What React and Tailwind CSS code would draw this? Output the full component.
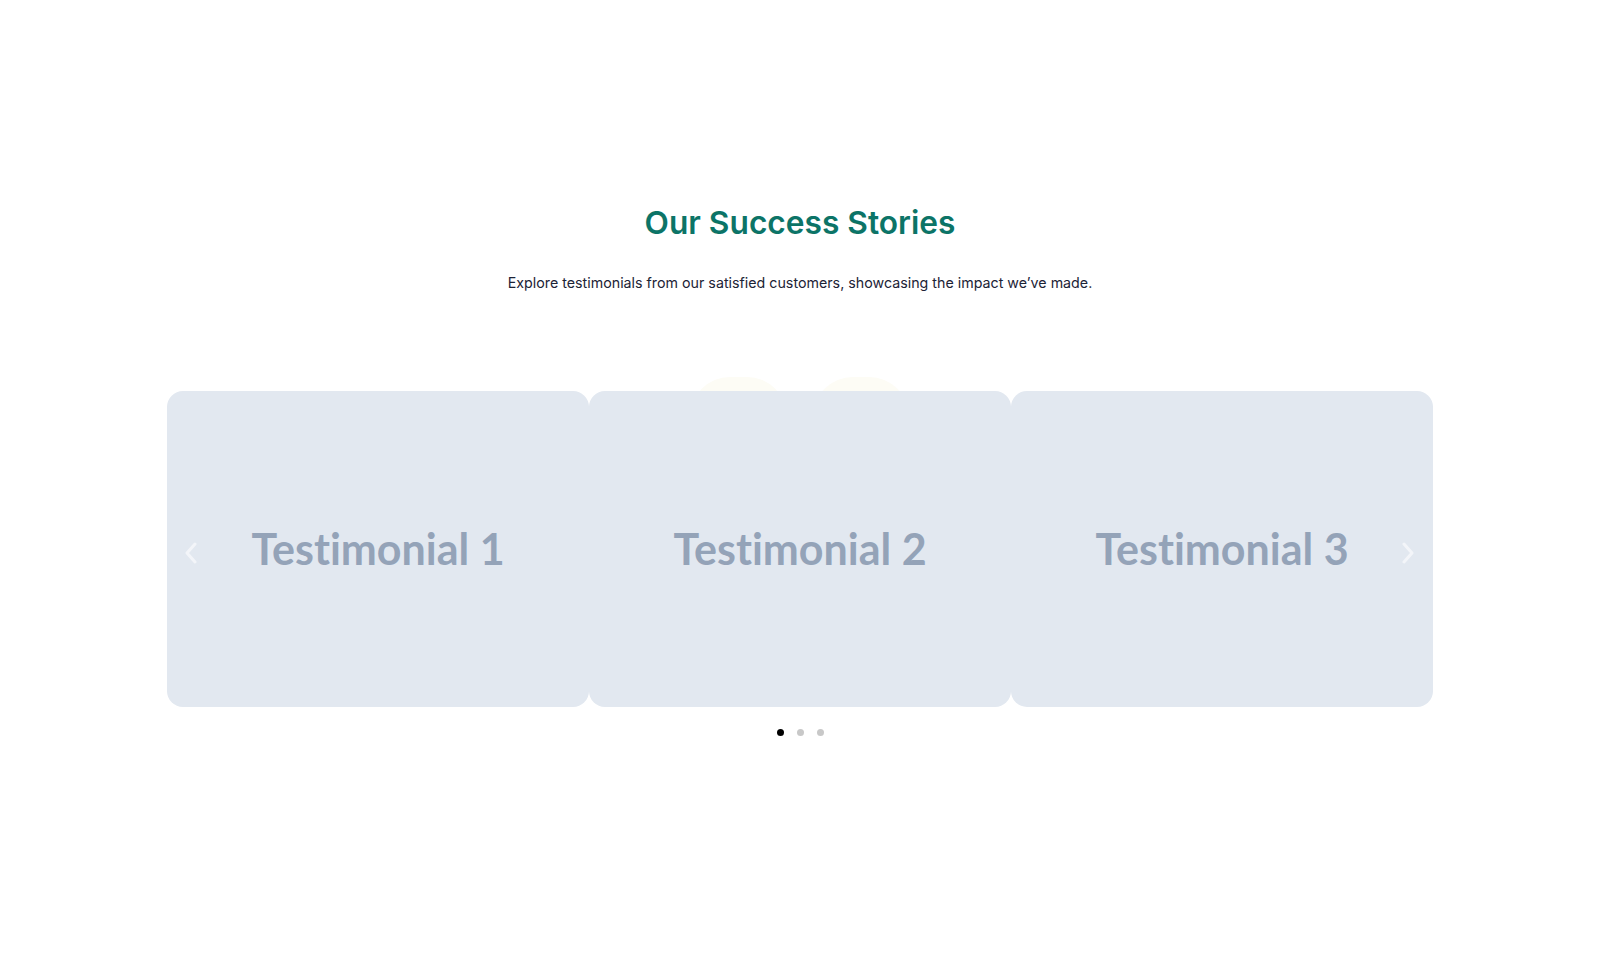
import React from 'react';

const testimonials = ['Testimonial 1', 'Testimonial 2', 'Testimonial 3'];

const Chevron = ({ dir }) => (
  <svg width="14" height="22" viewBox="0 0 14 22" fill="none">
    <polyline
      points={dir === 'left' ? '11,2 3,11 11,20' : '3,2 11,11 3,20'}
      stroke="#f3f5f9"
      strokeWidth="3"
      strokeLinecap="round"
      strokeLinejoin="round"
    />
  </svg>
);

export default function App() {
  return (
    <div className="min-h-screen bg-white flex flex-col items-center pt-[205px]" style={{ fontFamily: 'Lato, sans-serif' }}>
      <h2 className="text-[31.7px] leading-9 font-semibold text-[#0c7467]" style={{ fontFamily: 'Inter, sans-serif' }}>
        Our Success Stories
      </h2>
      <p className="mt-[30px] text-[14.25px] leading-6 text-[#1c2336]" style={{ fontFamily: 'Inter, sans-serif' }}>
        Explore testimonials from our satisfied customers, showcasing the impact we’ve made.
      </p>

      <div className="relative mt-[96px] w-[1266px]">
        {/* soft backdrop tabs peeking above the slides */}
        <div className="absolute -top-[14px] left-[523px] h-10 w-[97px] rounded-t-[40px] bg-[#fdfcf5]" />
        <div className="absolute -top-[14px] left-[646px] h-10 w-[96px] rounded-t-[40px] bg-[#fdfcf5]" />

        <div className="relative flex">
          {testimonials.map((t) => (
            <div key={t} className="flex h-[316px] w-[422px] items-center justify-center rounded-2xl bg-[#e2e8f0]">
              <span className="text-[43px] font-bold text-[#94a3b8] [font-variant-ligatures:none] [font-feature-settings:'liga'_0]">{t}</span>
            </div>
          ))}
          <button className="absolute left-[17px] top-[151px]">
            <Chevron dir="left" />
          </button>
          <button className="absolute right-[18px] top-[151px]">
            <Chevron dir="right" />
          </button>
        </div>
      </div>

      <div className="mt-[22px] flex gap-[13px]">
        <span className="h-[7px] w-[7px] rounded-full bg-black" />
        <span className="h-[7px] w-[7px] rounded-full bg-[#c8c8c8]" />
        <span className="h-[7px] w-[7px] rounded-full bg-[#c8c8c8]" />
      </div>
    </div>
  );
}
